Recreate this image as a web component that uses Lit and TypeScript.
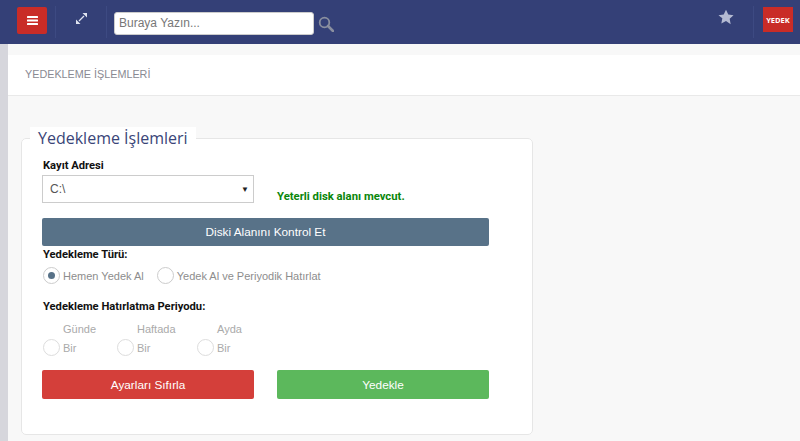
import { css, html, LitElement } from 'lit';
import { customElement } from 'lit/decorators.js';

@customElement('app-root')
export class AppRoot extends LitElement {
  static override styles = css`
    :host {
      display: block;
      height: 441px;
      overflow: hidden;
      background: #f8f8f8;
      font-family: 'Liberation Sans', Arial, sans-serif;
      font-size: 12px;
      color: #555;
    }
    .topbar {
      height: 44px;
      background: #344077;
      display: flex;
      align-items: center;
    }
    .menu-btn {
      width: 30px;
      height: 27px;
      margin: -4px 0 0 17px;
      background: #c92c27;
      border-radius: 2px;
      display: flex;
      align-items: center;
      justify-content: center;
    }
    .sep {
      width: 1px;
      height: 32px;
      background: #3d4a82;
      flex: none;
    }
    .sep.a { margin-left: 8px; }
    .expand {
      width: 50px;
      display: flex;
      justify-content: center;
      margin-top: -8px;
    }
    .search {
      width: 200px;
      height: 23px;
      box-sizing: border-box;
      margin: 3px 0 0 7px;
      padding: 0 4px;
      background: #fff;
      border: 1px solid #ccc;
      border-radius: 3px;
      font-size: 12px;
      line-height: 21px;
      color: #777;
    }
    .search-icon { margin: 3px 0 0 4px; }
    .spacer { flex: 1; }
    .star { margin: -10px 19px 0 0; }
    .logo {
      width: 30px;
      height: 25px;
      margin: -5px 7px 0 9px;
      background: #c92c27;
      color: #fff;
      font: 700 7.5px 'Open Sans', sans-serif;
      display: flex;
      align-items: center;
      justify-content: center;
    }
    .body {
      margin-left: 8px;
      padding-top: 11px;
    }
    .strip {
      position: absolute;
      left: 0;
      top: 44px;
      width: 8px;
      height: 397px;
      background: #d6d6dc;
    }
    .crumb {
      height: 41px;
      box-sizing: border-box;
      background: #fff;
      border-bottom: 1px solid #e9e9e9;
      padding-left: 17px;
      line-height: 39px;
      font-size: 10.8px;
      color: #8a8a92;
    }
    fieldset {
      width: 512px;
      height: 308px;
      box-sizing: border-box;
      margin: 31px 0 0 13px;
      padding: 0;
      background: #fff;
      border: 1px solid #e6e6e6;
      border-radius: 5px;
    }
    legend {
      margin-left: 8px;
      padding: 0 8px;
      background: #fff;
      font: 500 16px/22px 'Open Sans', sans-serif;
      color: #3a4578;
    }
    .content { padding: 10px 0 0 20px; }
    label, .lbl {
      display: block;
      padding-left: 1px;
      font: 700 11.2px/14px 'Roboto', sans-serif;
      color: #111;
    }
    .row {
      display: flex;
      align-items: center;
      margin-top: 2px;
    }
    .select {
      width: 212px;
      height: 28px;
      box-sizing: border-box;
      padding: 0 4px 0 7px;
      border: 1px solid #ccc;
      display: flex;
      align-items: center;
      justify-content: space-between;
      color: #555;
    }
    .select span:last-child { font-size: 8px; color: #222; }
    .ok {
      margin: 14px 0 0 23px;
      font: 700 11.3px 'Roboto', sans-serif;
      color: #0a860a;
    }
    .btn {
      height: 28px;
      box-sizing: border-box;
      border-radius: 2px;
      font-size: 11.8px;
      color: #fff;
      display: flex;
      align-items: center;
      justify-content: center;
    }
    .check { width: 447px; margin-top: 15px; background: #587288; }
    .type { margin-top: 2px; }
    .radios {
      display: flex;
      align-items: center;
      margin-top: 5px;
      font-size: 11px;
      color: #8d8d8d;
    }
    .radio {
      width: 17px;
      height: 17px;
      box-sizing: border-box;
      flex: none;
      border: 1px solid #ccc;
      border-radius: 50%;
      background: #fff;
      display: flex;
      align-items: center;
      justify-content: center;
      margin: 0 3px 0 1px;
    }
    .radio i {
      width: 7px;
      height: 7px;
      border-radius: 50%;
      background: #587288;
    }
    .radios .second { margin-left: 13px; }
    .period { margin-top: 16px; }
    .periods {
      display: flex;
      margin-top: 8px;
      font-size: 11px;
      color: #aaa;
    }
    .period-item { width: 74px; }
    .period-item:nth-child(2) { width: 80px; }
    .period-item .name { padding-left: 21px; line-height: 15px; }
    .period-item .opt {
      display: flex;
      align-items: center;
      margin-top: 2px;
    }
    .period-item .radio { border-color: #ddd; }
    .actions {
      display: flex;
      gap: 23px;
      margin-top: 14px;
    }
    .actions .btn { width: 212px; height: 29px; }
    .reset { background: #d43f3a; }
    .save { background: #5cb85c; }
  `;

  override render() {
    return html`
      <div class="topbar">
        <div class="menu-btn">
          <svg width="11" height="9" viewBox="0 0 11 9" fill="#fff">
            <rect width="11" height="2" rx=".5" />
            <rect y="3.5" width="11" height="2" rx=".5" />
            <rect y="7" width="11" height="2" rx=".5" />
          </svg>
        </div>
        <div class="sep a"></div>
        <div class="expand">
          <svg width="11" height="11" viewBox="0 0 11 11">
            <path d="M3 8l5-5" stroke="#dfe3f0" stroke-width="1.2" />
            <path d="M6.5 0H11v4.5zM4.5 11H0V6.5z" fill="#dfe3f0" />
          </svg>
        </div>
        <div class="sep"></div>
        <div class="search">Buraya Yazın...</div>
        <svg class="search-icon" width="16" height="16" viewBox="0 0 16 16" fill="none" stroke="#8a8f9f" stroke-width="1.8">
          <circle cx="6.5" cy="6.5" r="4.8" />
          <path d="M10 10l5 5" stroke-width="2.6" stroke-linecap="round" />
        </svg>
        <div class="spacer"></div>
        <svg class="star" width="16" height="16" viewBox="0 0 24 24" fill="#b4bad2">
          <path d="M12 1l3.4 7.3 7.9 1-5.8 5.5 1.5 7.9L12 17.9l-7 3.8 1.5-7.9L.7 9.3l7.9-1z" />
        </svg>
        <div class="sep"></div>
        <div class="logo">YEDEK</div>
      </div>
      <div class="strip"></div>
      <div class="body">
        <div class="crumb">YEDEKLEME İŞLEMLERİ</div>
        <fieldset>
          <legend>Yedekleme İşlemleri</legend>
          <div class="content">
            <label>Kayıt Adresi</label>
            <div class="row">
              <div class="select"><span>C:\\</span><span>▼</span></div>
              <div class="ok">Yeterli disk alanı mevcut.</div>
            </div>
            <div class="btn check">Diski Alanını Kontrol Et</div>
            <div class="lbl type">Yedekleme Türü:</div>
            <div class="radios">
              <span class="radio"><i></i></span>Hemen Yedek Al
              <span class="radio second"></span>Yedek Al ve Periyodik Hatırlat
            </div>
            <div class="lbl period">Yedekleme Hatırlatma Periyodu:</div>
            <div class="periods">
              ${['Günde', 'Haftada', 'Ayda'].map(
                (name) => html`
                  <div class="period-item">
                    <div class="name">${name}</div>
                    <div class="opt"><span class="radio"></span>Bir</div>
                  </div>
                `
              )}
            </div>
            <div class="actions">
              <div class="btn reset">Ayarları Sıfırla</div>
              <div class="btn save">Yedekle</div>
            </div>
          </div>
        </fieldset>
      </div>
    `;
  }
}
